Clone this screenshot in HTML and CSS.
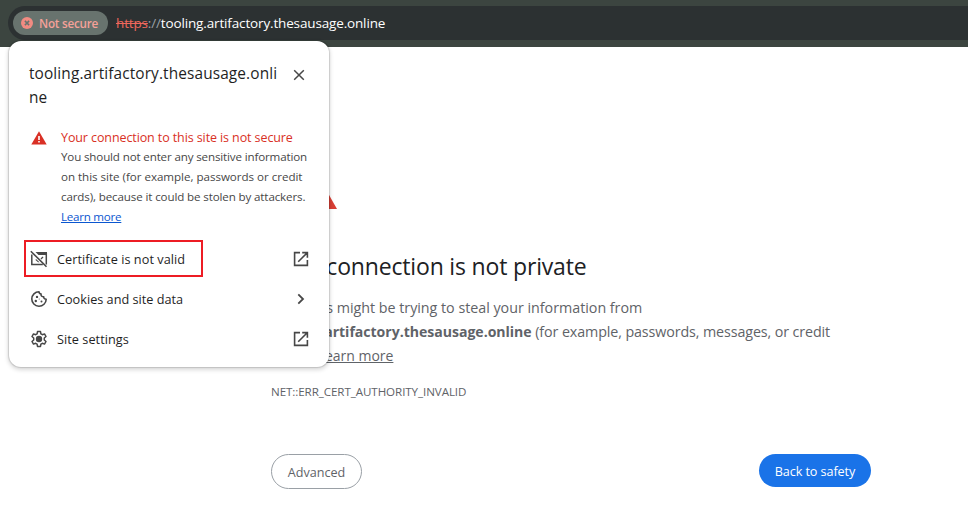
FILE: index.html
```html
<!DOCTYPE html>
<html lang="en">
<head>
<meta charset="utf-8">
<title>Privacy error</title>
<link rel="stylesheet" href="styles.css">
</head>
<body>
<header class="toolbar">
  <div class="omnibox">
    <div class="chip">
      <svg width="12" height="12" viewBox="0 0 12 12"><circle cx="6" cy="6" r="6" fill="#f28b82"/><path d="M3.9 3.9l4.2 4.2M8.1 3.9L3.9 8.1" stroke="#68736e" stroke-width="1.5"/></svg>
      <span class="chip-label">Not secure</span>
    </div>
    <div class="url"><span class="scheme">https</span><span class="slashes">://</span><span class="host">tooling.artifactory.thesausage.online</span></div>
  </div>
</header>

<main class="interstitial">
  <svg class="warning" width="72" height="72" viewBox="0 0 72 72"><path d="M33 10L66 68H0z" fill="#d93f35"/><path d="M30 32h6v16h-6zM30 54h6v6h-6z" fill="#fff"/></svg>
  <h1><span class="head">Your connection is not private</span></h1>
  <p class="body-text">
    <span class="line l1">Attackers might be trying to steal your information from</span>
    <span class="line l2"><strong>tooling.artifactory.thesausage.online</strong> <span class="rest">(for example, passwords, messages, or credit</span></span>
    <span class="line l3">cards). <a>Learn more</a></span>
  </p>
  <div class="code">NET::ERR_CERT_AUTHORITY_INVALID</div>
  <div class="buttons">
    <button class="secondary">Advanced</button>
    <button class="primary">Back to safety</button>
  </div>
</main>

<section class="popup">
  <div class="popup-head">
    <div class="title"><span>tooling.artifactory.thesausage.onli</span><br>ne</div>
    <svg class="close" width="12" height="12" viewBox="0 0 12 12"><path d="M1.2 1.2l9.6 9.6M10.8 1.2L1.2 10.8" stroke="#474747" stroke-width="1.5"/></svg>
  </div>
  <div class="security">
    <svg width="16" height="14" viewBox="0 0 16 14"><path d="M8 .2L15.7 13.6H.3z" fill="#d93025"/><path d="M7.2 5h1.6v4H7.2zM7.2 10h1.6v1.6H7.2z" fill="#fff"/></svg>
    <div class="security-text">
      <div class="summary">Your connection to this site is not secure</div>
      <div class="details"><span class="d1">You should not enter any sensitive information</span><br><span class="d2">on this site (for example, passwords or credit</span><br><span class="d3">cards), because it could be stolen by attackers.</span><br><a class="learn">Learn more</a></div>
    </div>
  </div>
  <div class="menu">
    <div class="row highlighted">
      <svg class="icon" width="18" height="18" viewBox="0 0 18 18" fill="none" stroke="#474747"><path d="M16.300 3v11.500M1.800 4.500v9.900h11" stroke-width="1.500"/><path d="M5.500 2H17v3H8.500z" fill="#474747" stroke="none"/><path d="M.8 1.200l15.700 15.500" stroke-width="1.600"/><path d="M11 9l2-2.100" stroke-width="1.300"/><path d="M6 9l3.500 3.300H8L5.500 10z" fill="#474747" stroke="none"/></svg>
      <span class="m1">Certificate is not valid</span>
      <svg class="end" width="16" height="16" viewBox="0 0 16 16" fill="none" stroke="#474747" stroke-width="1.6"><path d="M7 1.6H1.6v12.8h12.8V9M9.2 1.6h5.2v5.2M14.2 1.8L5.2 10.8"/></svg>
    </div>
    <div class="row">
      <svg class="icon" width="18" height="18" viewBox="0 0 18 18" fill="none" stroke="#474747" stroke-width="1.6"><path d="M9 1.800a7.200 7.200 0 1 0 7.200 7.400c-1.700 0-2.600-1-2.500-2.500-2 0-3-1.100-2.600-2.700C9.800 3.800 9 3 9 1.800z" stroke-linejoin="round"/><g fill="#474747" stroke="none"><circle cx="7" cy="6.900" r="1.200"/><circle cx="5.800" cy="11" r="1.200"/><circle cx="11.500" cy="11.500" r="1"/><circle cx="9.200" cy="9.100" r=".5"/></g></svg>
      <span class="m2">Cookies and site data</span>
      <svg class="end" width="16" height="16" viewBox="0 0 16 16" fill="none" stroke="#474747" stroke-width="1.8"><path d="M5.300 3.300L10 8l-4.700 4.700"/></svg>
    </div>
    <div class="row">
      <svg class="icon" width="18" height="18" viewBox="0 0 18 18" fill="none" stroke="#474747"><path d="M7.500 1.600h3l.4 2.200 1.500.9 2.100-.8 1.500 2.600-1.700 1.500v2l1.700 1.500-1.500 2.600-2.100-.8-1.500.9-.4 2.200h-3l-.4-2.200-1.500-.9-2.100.8L2 11.500 3.700 10V8L2 6.500l1.500-2.600 2.100.8 1.500-.9z" stroke-width="1.500" stroke-linejoin="round"/><circle cx="9" cy="9" r="3.200" fill="#474747" stroke="none"/></svg>
      <span class="m3">Site settings</span>
      <svg class="end" width="16" height="16" viewBox="0 0 16 16" fill="none" stroke="#474747" stroke-width="1.6"><path d="M7 1.600H1.600v12.800h12.800V9M9.200 1.600h5.200v5.200M14.200 1.800L5.200 10.800"/></svg>
    </div>
  </div>
</section>
</body>
</html>
```
FILE: styles.css
```css
*, *::before { box-sizing: border-box; }
body {
  margin: 0;
  height: 527px;
  overflow: hidden;
  background: #fff;
  font-family: "Open Sans", "Noto Sans", sans-serif;
}
svg { display: block; flex: none; }
span, .title, button, .code { white-space: nowrap; }

.toolbar { height: 47px; padding: 6px 0 0 8px; background: #3c4540; }
.omnibox {
  height: 34px;
  display: flex;
  align-items: center;
  padding-left: 5px;
  gap: 8px;
  background: #2c3132;
  border-radius: 17px 0 0 17px;
}
.chip {
  width: 95px;
  height: 24px;
  display: flex;
  align-items: center;
  gap: 6px;
  padding-left: 8px;
  border-radius: 12px;
  background: #68736e;
  color: #f5a199;
  font-size: 11.7px;
  font-weight: 600;
  letter-spacing: -.23px;
}
.chip-label { margin-top: -1px; }
.url { font-size: 13.5px; letter-spacing: -.15px; line-height: 20px; white-space: nowrap; color: #fff; }
.scheme { color: #ee675c; text-decoration: line-through; }
.slashes { color: #9aa0a6; }

.interstitial { width: 600px; margin: 94px 0 0 271px; color: #5f6368; }
.warning { margin-bottom: 37px; }
h1 { margin: 0; font-size: 23px; letter-spacing: -.17px; line-height: 32px; font-weight: 400; color: #202124; }
.body-text { margin: 14px 0 0; font-size: 14.3px; letter-spacing: -.02px; line-height: 24px; }
.line { display: block; }
.l2 { letter-spacing: -.11px; }
.l2 strong { font-size: 14.1px; letter-spacing: -.03px; }
.l3 { font-size: 14px; }
.body-text a { text-decoration: underline; }
.code { margin-top: 14px; font-size: 11.6px; letter-spacing: -.08px; line-height: 20px; }
.buttons { display: flex; justify-content: space-between; margin-top: 52px; }
button {
  font-family: inherit;
  font-size: 12.6px;
  border-radius: 18px;
  padding: 2px 0 0;
}
.secondary { width: 91px; height: 35px; border: 1px solid #9aa0a6; background: #fff; color: #5f6368; }
.primary { width: 112px; height: 33px; border: 0; background: #1a73e8; color: #fff; letter-spacing: -.08px; }

.popup {
  position: absolute;
  left: 9px;
  top: 41px;
  width: 320px;
  height: 326px;
  padding: 21px 20px 0;
  border-radius: 12px;
  background: #fff;
  box-shadow: 0 0 1px 1px rgba(0, 0, 0, .13), 0 2px 4px 1px rgba(0, 0, 0, .15);
  color: #1f1f1f;
}
.popup-head { display: flex; justify-content: space-between; height: 66px; }
.title { font-size: 15.4px; letter-spacing: .04px; line-height: 24px; font-weight: 500; }
.close { margin: 7px 4px 0 0; }
.security { display: flex; gap: 14px; margin-left: 2px; }
.security > svg { margin-top: 3px; }
.summary { font-size: 12.5px; letter-spacing: -.1px; line-height: 20px; color: #d93025; white-space: nowrap; }
.details { margin-top: -1px; font-size: 11.6px; letter-spacing: -.15px; line-height: 20px; color: #474747; white-space: nowrap; }
.d2 { letter-spacing: -.03px; }
.d3 { letter-spacing: -.13px; }
.learn { color: #0b57d0; text-decoration: underline; letter-spacing: -.25px; }
.menu { margin-top: 12px; }
.title span { letter-spacing: .12px; }
.row {
  height: 40px;
  margin-left: -5px;
  padding: 0 0 0 6px;
  display: flex;
  align-items: center;
  gap: 9px;
  position: relative;
  font-size: 12.7px;
  font-weight: 500;
}
.m1 { letter-spacing: .05px; }
.m3 { letter-spacing: .05px; }
.end { margin-left: auto; }
.highlighted::before {
  content: "";
  position: absolute;
  left: 0;
  top: 1px;
  width: 179px;
  height: 37px;
  border: 2px solid #ed1c24;
}
```
